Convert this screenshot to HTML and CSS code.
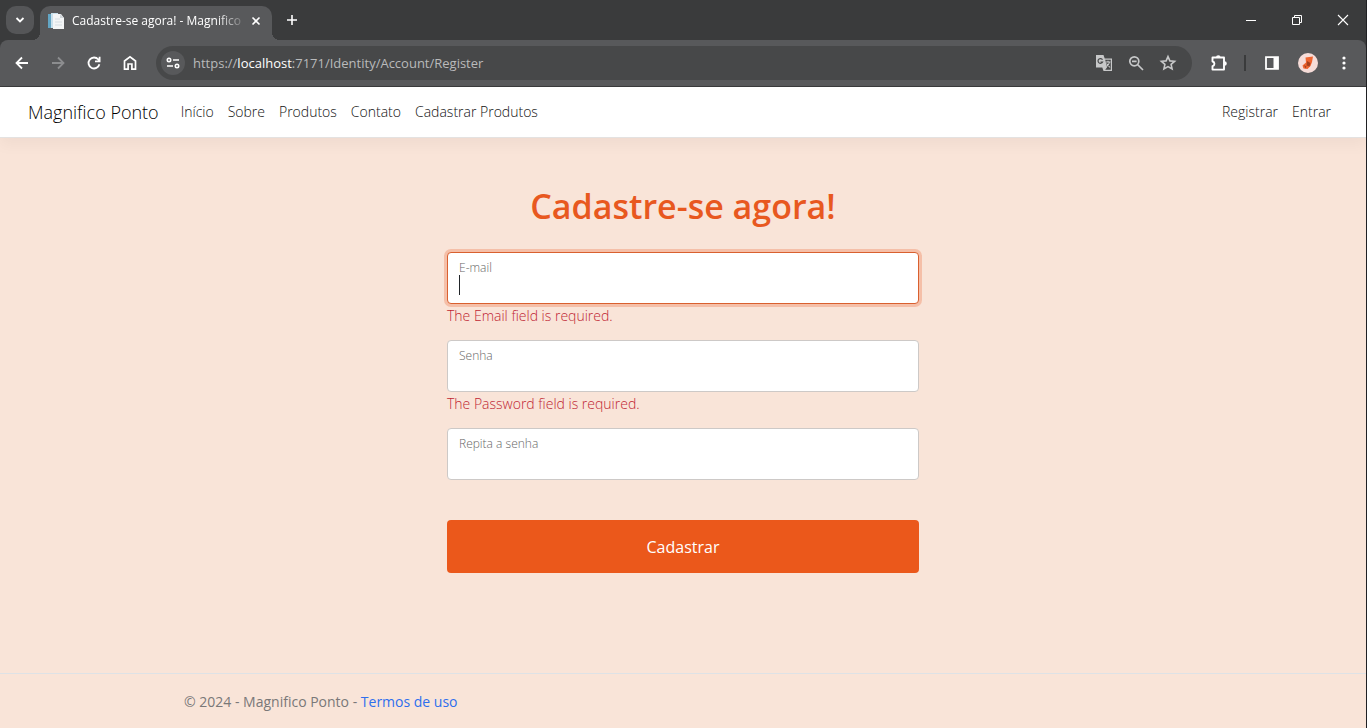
FILE: index.html
```html
<!DOCTYPE html>
<html lang="pt-BR">
<head>
<meta charset="utf-8">
<title>Cadastre-se agora! - Magnifico Ponto</title>
<link rel="stylesheet" href="styles.css">
</head>
<body>
<div class="window">
  <div class="tabstrip">
    <button class="tab-search" aria-label="Pesquisar guias"><svg width="16" height="16" viewBox="0 0 16 16"><path d="M4.500 6l3.500 3.500L11.500 6" fill="none" stroke="#fff" stroke-width="1.800"/></svg></button>
    <div class="tab">
      <svg class="favicon" width="16" height="16" viewBox="0 0 16 16"><path d="M0 1h4v14H0z" fill="#62a5c4"/><path d="M3 0h7l1 15H3z" fill="#c9e0ec"/><path d="M5 1h8l3 4v11H5z" fill="#f3f5f6"/><path d="M12 1v4h4" fill="#d0d6da"/><path d="M7 6h5M7 9h7M7 12h7" stroke="#d5dde2"/></svg>
      <span class="tab-title">Cadastre-se agora! - Magnifico</span>
      <button class="tab-close" aria-label="Fechar guia"><svg width="16" height="16" viewBox="0 0 16 16"><path d="M4.500 4.500l7 7M11.500 4.500l-7 7" stroke="#fff" stroke-width="1.600"/></svg></button>
    </div>
    <button class="new-tab" aria-label="Nova guia"><svg width="16" height="16" viewBox="0 0 16 16"><path d="M8 3v10M3 8h10" stroke="#fff" stroke-width="1.600"/></svg></button>
    <div class="window-controls">
      <button aria-label="Minimizar"><svg width="12" height="12" viewBox="0 0 12 12"><path d="M1 6.500h10" stroke="#fff"/></svg></button>
      <button aria-label="Restaurar"><svg width="12" height="12" viewBox="0 0 12 12"><path d="M1.500 3.500h7v7h-7zM3.500 3.500v-2h7v7h-2" fill="none" stroke="#fff"/></svg></button>
      <button aria-label="Fechar"><svg width="12" height="12" viewBox="0 0 12 12"><path d="M1 1l10 10M11 1L1 11" stroke="#fff" stroke-width="1.100"/></svg></button>
    </div>
  </div>
  <div class="toolbar">
    <div class="nav-buttons">
      <button aria-label="Voltar"><svg width="16" height="16" viewBox="0 0 16 16"><path d="M14 8H3M8 2.500L2.500 8L8 13.500" fill="none" stroke="#fff" stroke-width="1.800"/></svg></button>
      <button aria-label="Avançar"><svg width="16" height="16" viewBox="0 0 16 16"><path d="M2 8h11M8 2.500L13.500 8L8 13.500" fill="none" stroke="#8c8d8f" stroke-width="1.800"/></svg></button>
      <button aria-label="Recarregar"><svg width="16" height="16" viewBox="0 0 16 16"><path d="M13.400 9.200A5.500 5.500 0 1 1 12.300 4.500L13.500 6M13.600 1.800V6.300H9" fill="none" stroke="#fff" stroke-width="1.800"/></svg></button>
      <button aria-label="Página inicial"><svg width="16" height="16" viewBox="0 0 16 16"><path d="M2.500 6L8 1.900L13.500 6v8.100H9.900V9H6.100v5.100H2.500z" fill="none" stroke="#fff" stroke-width="1.700"/></svg></button>
    </div>
    <div class="omnibox">
      <button class="site-info" aria-label="Informações do site"><svg width="14" height="14" viewBox="0 0 14 14"><g fill="none" stroke="#fff" stroke-width="1.600"><circle cx="3" cy="4" r="1.700"/><path d="M7 4h6M1 10h6"/><circle cx="11" cy="10" r="1.700"/></g></svg></button>
      <div class="url">https://<span class="host">localhost</span>:7171/Identity/Account/Register</div>
      <div class="omnibox-actions">
        <button aria-label="Traduzir"><svg width="18" height="18" viewBox="0 0 18 18"><path d="M1 1h7.500l1.200 3.500H17V17H8.500L7.300 13.500H1z" fill="#c7c8c9"/><path d="M10.200 5.700h5.600v10.100h-5.600l1.800-2.300z" fill="#474849"/><path d="M7.500 5.700A2.400 2.400 0 1 0 7.600 8H5.500" fill="none" stroke="#474849" stroke-width="1.200"/><path d="M10.500 8h5M13 6.800V8M14.500 8c-.3 2-1.500 3.500-3 4.500M11.500 9.500l3.500 4" fill="none" stroke="#c7c8c9" stroke-width="1.100"/></svg></button>
        <button aria-label="Zoom"><svg width="16" height="16" viewBox="0 0 16 16"><g fill="none" stroke="#c7c8c9" stroke-width="1.700"><circle cx="6.300" cy="6.300" r="4.500"/><path d="M9.500 9.500l5.500 5.500M4 6.300h4.600"/></g></svg></button>
        <button aria-label="Favoritar"><svg width="18" height="18" viewBox="0 0 18 18"><path d="M9 2.600l1.900 4.300 4.700.4-3.500 3.100 1 4.600L9 12.600l-4.100 2.400 1-4.600-3.500-3.100 4.700-.4z" fill="none" stroke="#c7c8c9" stroke-width="1.600"/></svg></button>
      </div>
    </div>
    <div class="toolbar-actions">
      <button class="extensions" aria-label="Extensões"><svg width="18" height="18" viewBox="0 0 18 18"><path d="M2.500 3.500H14v12.100H2.500v-3.400a2.400 2.400 0 0 0 0-4.700z" fill="none" stroke="#fff" stroke-width="1.900" stroke-linejoin="round"/><path d="M6 3.500a2.300 2.300 0 0 1 4.600 0zM14.500 7.200a2.300 2.300 0 0 1 0 4.600z" fill="#fff"/></svg></button>
      <span class="separator"></span>
      <button aria-label="Painel lateral"><svg width="16" height="16" viewBox="0 0 16 16"><path d="M2 2.200h12v11.600H2z" fill="none" stroke="#fff" stroke-width="1.800"/><path d="M9.500 2H14v12H9.500z" fill="#fff"/></svg></button>
      <button aria-label="Perfil"><svg width="20" height="20" viewBox="0 0 20 20"><circle cx="10" cy="10" r="10" fill="#f6dcd8"/><path d="M7.500 4.500L15 3.500l-1 5.500-1.500 4-3 3-4-.5-1-3 3.500-3z" fill="#ee6430"/><path d="M9 8l3.500 2-1 3.500-3-1zM6 12l2.500 1.500-1 2z" fill="#a5401e"/></svg></button>
      <button aria-label="Menu"><svg width="16" height="16" viewBox="0 0 16 16"><g fill="#fff"><circle cx="8" cy="3" r="1.600"/><circle cx="8" cy="8" r="1.600"/><circle cx="8" cy="13" r="1.600"/></g></svg></button>
    </div>
  </div>
  <div class="page">
    <header class="navbar">
      <a class="brand" href="#">Magnifico Ponto</a>
      <nav class="nav-links">
        <a href="#">Início</a><a href="#">Sobre</a><a href="#">Produtos</a><a href="#">Contato</a><a href="#">Cadastrar Produtos</a>
      </nav>
      <nav class="nav-links account-links"><a href="#">Registrar</a><a href="#">Entrar</a></nav>
    </header>
    <main class="content">
      <h1>Cadastre-se agora!</h1>
      <form class="register">
        <div class="field focused">
          <div class="box"><label for="email">E-mail</label><input id="email" type="email"><span class="caret"></span></div>
          <p class="error">The Email field is required.</p>
        </div>
        <div class="field">
          <div class="box"><label for="password">Senha</label><input id="password" type="password"></div>
          <p class="error">The Password field is required.</p>
        </div>
        <div class="field">
          <div class="box"><label for="confirm">Repita a senha</label><input id="confirm" type="password"></div>
        </div>
        <button class="submit" type="button">Cadastrar</button>
      </form>
    </main>
    <footer class="footer"><div class="footer-inner">© 2024 - Magnifico Ponto - <a href="#">Termos de uso</a></div></footer>
  </div>
</div>
</body>
</html>
```

FILE: styles.css
```css
* { box-sizing: border-box; }
body { margin: 0; font-family: "Open Sans", "Noto Sans", sans-serif; font-size: 14px; line-height: 20px; }
button { border: 0; padding: 0; margin: 0; background: none; font: inherit; display: flex; align-items: center; justify-content: center; }
svg { display: block; flex: none; }
a { text-decoration: none; }
.window { min-height: 100vh; display: flex; flex-direction: column; background: #3a3b3c; border-right: 1px solid #202124; }

.tabstrip { height: 40px; display: flex; align-items: center; padding-left: 6px; color: #fff; }
.tab-search { width: 28px; height: 28px; border-radius: 10px; background: #555658; }
.tab { position: relative; align-self: flex-end; width: 232px; height: 34px; margin-left: 6px; padding: 0 8px 4px; display: flex; align-items: center; background: #58595b; border-radius: 10px 10px 0 0; font-size: 12px; }
.tab::before, .tab::after { content: ""; position: absolute; bottom: 0; width: 8px; height: 8px; }
.tab::before { right: 100%; background: radial-gradient(circle at 0 0, transparent 8px, #58595b 8px); }
.tab::after { left: 100%; background: radial-gradient(circle at 100% 0, transparent 8px, #58595b 8px); }
.tab-title { flex: 1; min-width: 0; margin: 0 0 0 8px; overflow: hidden; white-space: nowrap; mask-image: linear-gradient(to right, #000 82%, transparent); }
.new-tab { width: 28px; height: 28px; margin-left: 6px; }
.window-controls { margin-left: auto; display: flex; align-self: stretch; }
.window-controls button { width: 46px; }

.toolbar { height: 46px; display: flex; align-items: center; padding: 0 14px; background: #58595b; border-radius: 8px 8px 0 0; }
.nav-buttons { display: flex; gap: 20px; }
.nav-buttons button { width: 16px; height: 28px; }
.omnibox { flex: 1; height: 34px; margin-left: 18px; padding: 0 15px 0 5px; border-radius: 17px; background: #474849; display: flex; align-items: center; }
.site-info { width: 24px; height: 24px; border-radius: 50%; background: #58595b; }
.url { flex: 1; margin-left: 8px; font-size: 13px; color: #b9babb; }
.host { color: #fff; }
.omnibox-actions { display: flex; align-items: center; gap: 15px; }
.toolbar-actions { display: flex; align-items: center; gap: 18px; margin-left: 18px; }
.extensions { margin-right: -2px; }
.separator { width: 2px; height: 16px; background: #3a3b3c; }

.page { flex: 1; display: flex; flex-direction: column; margin-top: 1px; background: #f9e4d8; }
.navbar { height: 51px; padding: 0 35px 0 28px; display: flex; align-items: center; background: #fff; box-shadow: 0 7px 14px rgba(0, 0, 0, .04); border-bottom: 1px solid #e4e2e1; }
.brand { font-size: 18px; font-weight: 300; color: #000; }
.nav-links { display: flex; gap: 14px; margin-left: 22px; }
.nav-links a { font-weight: 300; color: #111; }
.account-links { margin-left: auto; }

.content { flex: 1; display: flex; flex-direction: column; align-items: center; padding-top: 46px; }
h1 { margin: 0 0 24px; font-size: 34px; line-height: 44px; font-weight: 600; color: #e8581f; }
.register { width: 472px; max-width: 100%; display: flex; flex-direction: column; gap: 14px; }
.box { position: relative; display: flex; flex-direction: column; height: 52px; padding: 6px 11px; background: #fff; border: 1px solid #cdc9c7; border-radius: 4px; }
.box label { font-size: 12px; line-height: 18px; font-weight: 300; color: #666; }
.box input { border: 0; outline: 0; padding: 0; height: 20px; font: inherit; background: transparent; caret-color: transparent; }
.focused .box { border-color: #d9602f; box-shadow: 0 0 0 3px #f5bfa8; }
.caret { position: absolute; left: 11px; top: 22px; width: 1px; height: 20px; background: #212529; }
.error { margin: 2px 0 0; font-weight: 300; color: #c01f33; }
.submit { height: 53px; margin-top: 26px; border-radius: 4px; background: #eb581b; color: #fff; font-size: 16px; }

.footer { border-top: 1px solid #dee2e6; color: #7a7878; }
.footer-inner { padding: 18px 184px 16px; }
.footer a { color: #2f6fed; }
```
